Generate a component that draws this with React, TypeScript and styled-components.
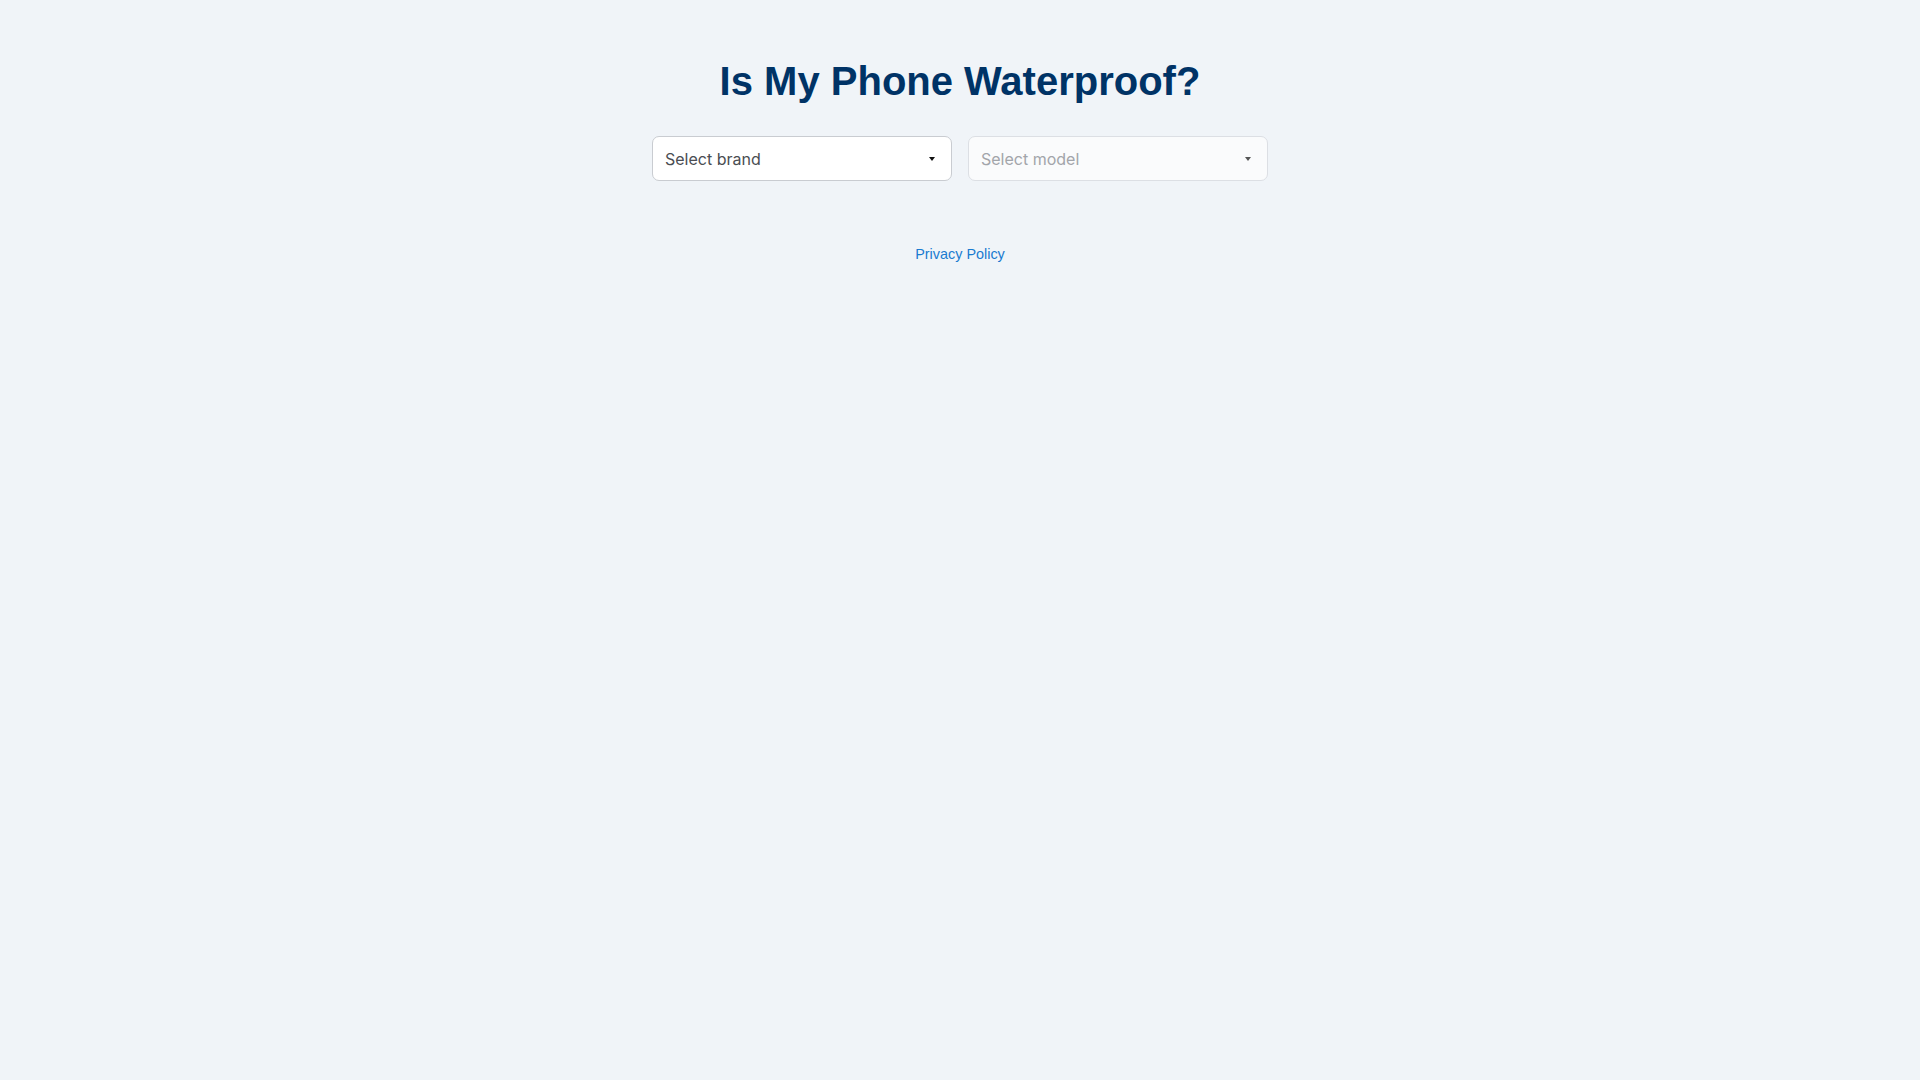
import React from 'react';
import styled, { createGlobalStyle } from 'styled-components';

const GlobalStyle = createGlobalStyle`
  html, body {
    margin: 0;
    padding: 0;
    background-color: #f0f4f8;
  }
  body {
    font-family: "Liberation Sans", Arial, sans-serif;
    min-height: 100vh;
  }
`;

const Page = styled.main`
  display: flex;
  flex-direction: column;
  align-items: center;
  padding-top: 57px;
`;

const Title = styled.h1`
  margin: 0;
  font-size: 40px;
  font-weight: 700;
  color: #003366;
  line-height: 48px;
`;

const Pickers = styled.div`
  display: flex;
  gap: 16px;
  margin-top: 31px;
`;

const SelectWrap = styled.div`
  position: relative;
  width: 300px;
`;

const Select = styled.select<{ $muted?: boolean }>`
  appearance: none;
  -webkit-appearance: none;
  width: 100%;
  height: 45px;
  box-sizing: border-box;
  padding: 0 32px 0 12px;
  border: 1px solid ${(p) => (p.$muted ? '#dcdfe4' : '#c9ccd1')};
  border-radius: 7px;
  background-color: ${(p) => (p.$muted ? '#fafbfc' : '#ffffff')};
  color: ${(p) => (p.$muted ? '#a2a5aa' : '#4a4d52')};
  font-family: Inter, "Noto Sans", sans-serif;
  font-size: 16px;
  outline: none;
  opacity: 1;

  &:disabled {
    opacity: 1;
    color: #a2a5aa;
    background-color: #fafbfc;
  }
`;

const Caret = styled.span<{ $muted?: boolean }>`
  position: absolute;
  right: 17px;
  top: 50%;
  margin-top: -2px;
  width: 0;
  height: 0;
  border-left: 3.5px solid transparent;
  border-right: 3.5px solid transparent;
  border-top: 4px solid ${(p) => (p.$muted ? '#555' : '#111')};
  pointer-events: none;
`;

const PrivacyLink = styled.a`
  margin-top: 64px;
  font-size: 14.4px;
  line-height: 18px;
  color: #1a7bd0;
  text-decoration: none;
`;

export default function App(): JSX.Element {
  return (
    <>
      <GlobalStyle />
      <Page>
        <Title>Is My Phone Waterproof?</Title>
        <Pickers>
          <SelectWrap>
            <Select defaultValue="">
              <option value="">Select brand</option>
            </Select>
            <Caret />
          </SelectWrap>
          <SelectWrap>
            <Select $muted disabled defaultValue="">
              <option value="">Select model</option>
            </Select>
            <Caret $muted />
          </SelectWrap>
        </Pickers>
        <PrivacyLink href="#">Privacy Policy</PrivacyLink>
      </Page>
    </>
  );
}
